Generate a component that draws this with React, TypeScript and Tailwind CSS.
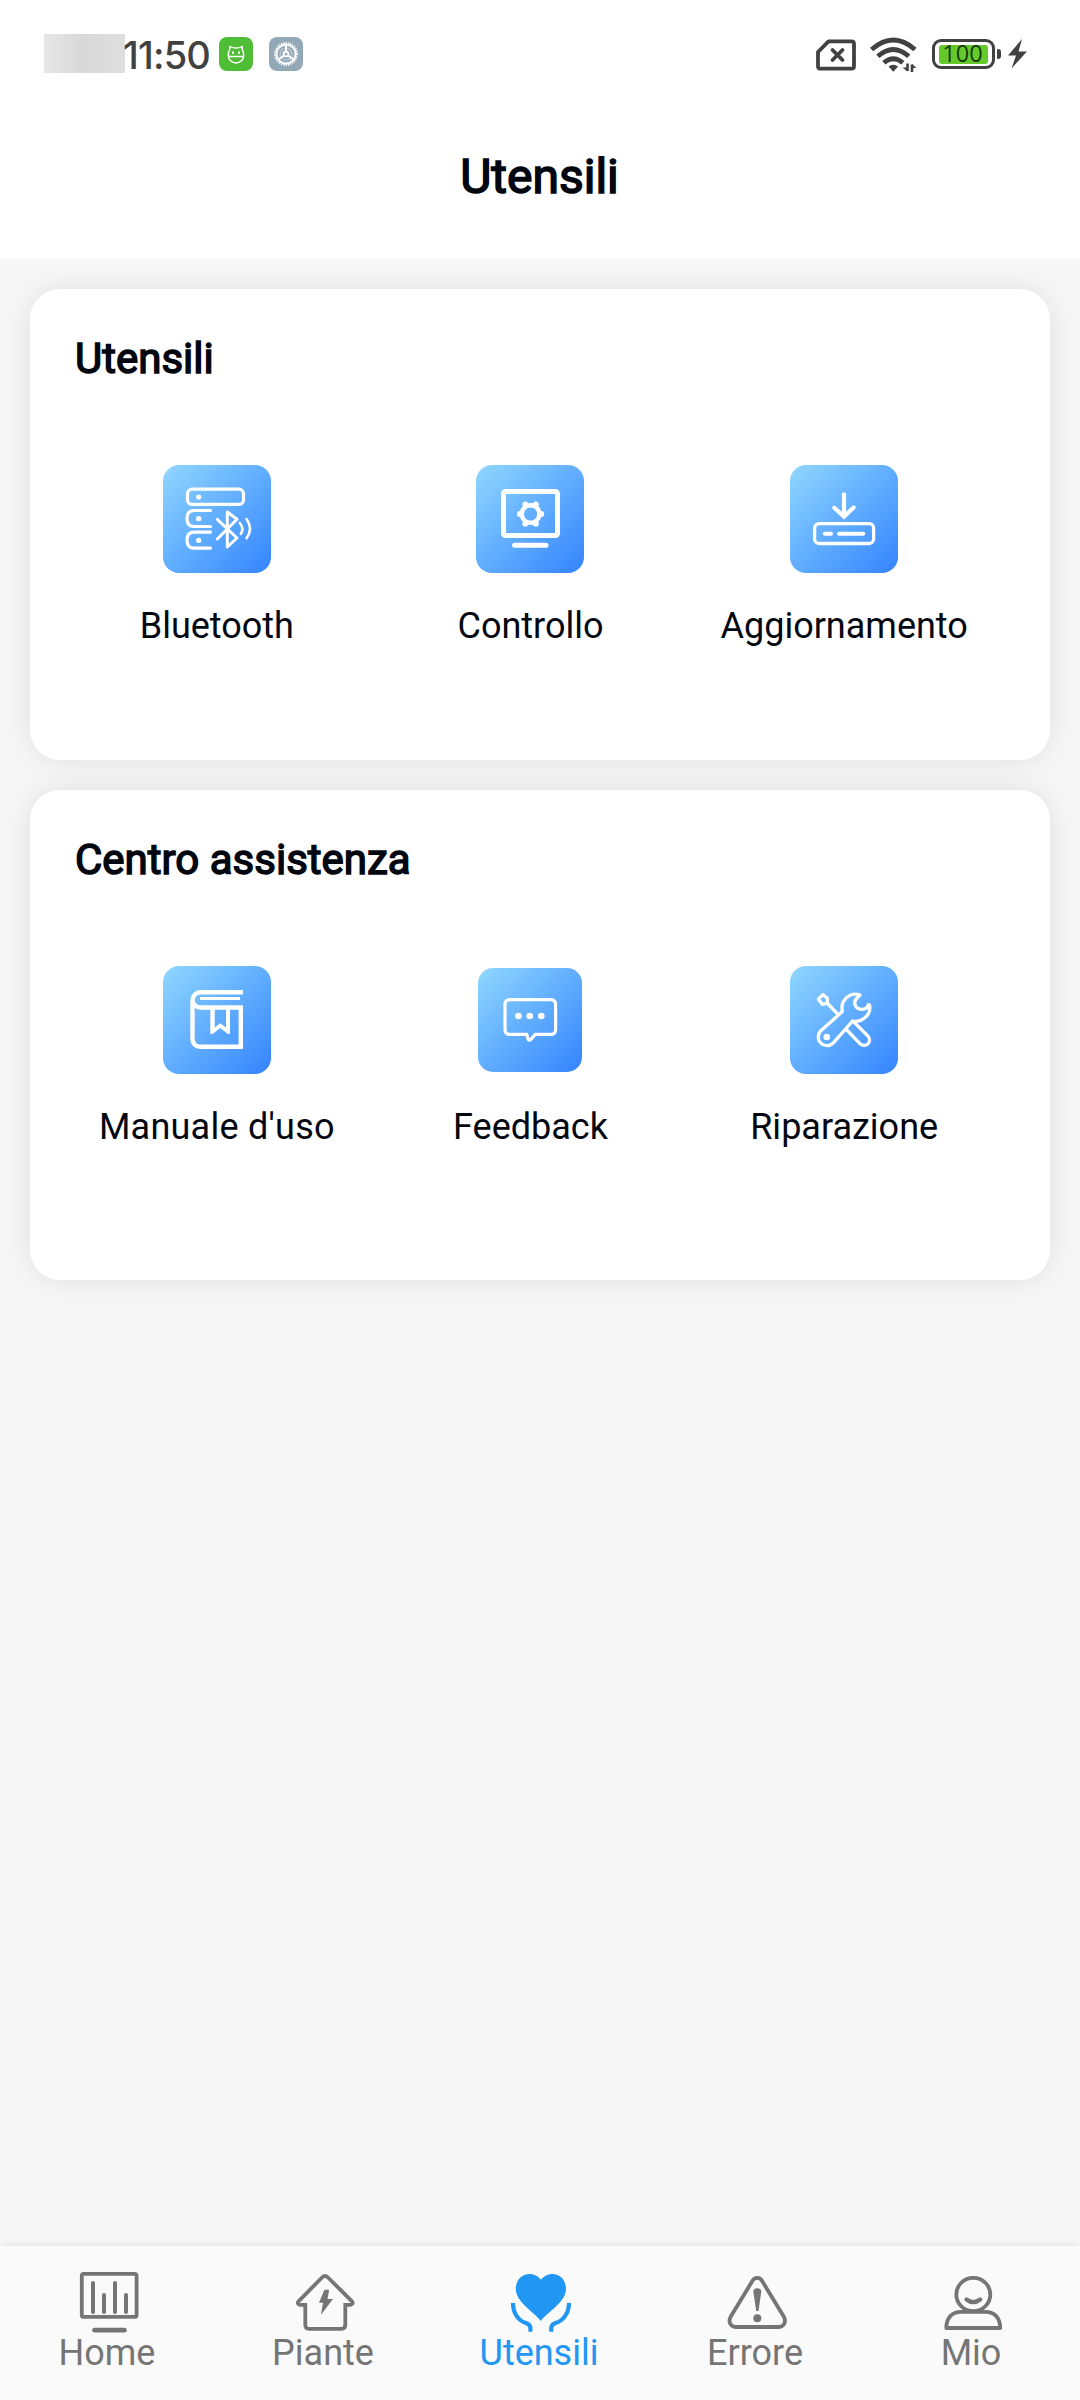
import type { ReactNode } from 'react'

interface Tool {
  label: string
  icon: ReactNode
  small?: boolean
}

function BluetoothIcon() {
  return (
    <svg viewBox="0 0 108 108" className="h-full w-full" fill="none" stroke="white" strokeWidth="3.2" strokeLinecap="round" strokeLinejoin="round">
      <rect x="24.5" y="24.2" width="56" height="15.2" rx="4.5" />
      <path d="M47.5 45.5H31C26 45.5 24 48 24 53.5S26 61.5 31 61.5H47.5" />
      <path d="M47.5 67.2H31C26 67.2 24 69.7 24 75.2S26 83.2 31 83.2H47.5" />
      <path d="M54.3 54.3L74 73L64.3 82V47L74 54.3L54.3 74" strokeWidth="3" />
      <path d="M76.8 58Q81.5 63.5 77.8 69M83.5 54Q90.5 63.5 83.5 73.2" strokeWidth="2.6" />
      <g fill="white" stroke="none">
        <circle cx="35.7" cy="32" r="2.6" />
        <circle cx="35.7" cy="53.7" r="2.6" />
        <circle cx="35.7" cy="75.4" r="2.6" />
      </g>
    </svg>
  )
}

function ControlIcon() {
  return (
    <svg viewBox="0 0 108 108" className="h-full w-full" fill="none" stroke="white" strokeWidth="5">
      <rect x="27.5" y="26.6" width="54" height="44" rx="2" />
      <path d="M38.6 80.3H70" strokeLinecap="round" />
      <circle cx="54.6" cy="49" r="8.8" strokeWidth="4.4" />
      <g fill="white" stroke="none">
        <circle cx="65.3" cy="49" r="2.9" />
        <circle cx="59.9" cy="39.3" r="2.9" />
        <circle cx="49.3" cy="39.3" r="2.9" />
        <circle cx="43.9" cy="49" r="2.9" />
        <circle cx="49.3" cy="58.7" r="2.9" />
        <circle cx="59.9" cy="58.7" r="2.9" />
      </g>
    </svg>
  )
}

function UpdateIcon() {
  return (
    <svg viewBox="0 0 108 108" className="h-full w-full" fill="none" stroke="white" strokeWidth="4.2" strokeLinecap="round">
      <path d="M54 29.3V51.5" />
      <path d="M44.3 42.8L54 51.6L63.6 42.4" />
      <rect x="24.6" y="58.7" width="59" height="19.8" rx="4.5" strokeWidth="3.3" />
      <path d="M34.8 68.8H41M49 68.8H73.3" strokeWidth="4" />
    </svg>
  )
}

function ManualIcon() {
  return (
    <svg viewBox="0 0 108 108" className="h-full w-full" fill="none" stroke="white" strokeWidth="4.4">
      <path d="M80 26.3H37.2A7.5 7.5 0 0 0 37.2 41.5H77.8V80.8H37A7.5 7.5 0 0 1 29.5 73.3V34" />
      <path d="M37 32.4H77" strokeWidth="3" />
      <path d="M47.3 41V68H49.5L57.3 62L64.8 68H67V41H63V61.5L57.3 57.3L51.7 61.5V41Z" fill="white" stroke="none" />
    </svg>
  )
}

function FeedbackIcon() {
  return (
    <svg viewBox="0 0 104 104" className="h-full w-full" fill="none" stroke="white" strokeWidth="3.2" strokeLinejoin="round">
      <path d="M32 31.6H72.6Q77.6 31.6 77.6 36.6V61.4Q77.6 66.4 72.6 66.4H57.3L53 71.2Q51 73.4 49.9 70.6L48.8 66.4H32Q27 66.4 27 61.4V36.6Q27 31.6 32 31.6Z" />
      <g fill="white" stroke="none">
        <circle cx="40.4" cy="48" r="3.3" />
        <circle cx="51.8" cy="48" r="3.3" />
        <circle cx="63.3" cy="48" r="3.3" />
      </g>
    </svg>
  )
}

function RepairIcon() {
  return (
    <svg viewBox="0 0 108 108" className="h-full w-full" fill="none" stroke="white" strokeWidth="3.3" strokeLinecap="round" strokeLinejoin="round">
      <path d="M52.3 45.6L30.6 65A8.7 8.7 0 0 0 42.9 77.3L62.6 55C71.5 57 81.5 49 79.6 39L78.3 38.6C77 44.5 67.5 45.5 65 38.5C63.8 34.5 66.5 32 70 29C60 25.5 50 34 52.3 45.6Z" />
      <path d="M28.4 33.2L33 28.6L37.3 32.2L37.4 37.2L32.4 38.4Z" />
      <path d="M38 38L48 48.4" />
      <path d="M64.2 56.3L78 70.2A5.4 5.4 0 0 1 70.2 77.8L56.8 64" />
      <circle cx="36.7" cy="71" r="3.3" fill="white" stroke="none" />
    </svg>
  )
}

const tools: Tool[] = [
  { label: 'Bluetooth', icon: <BluetoothIcon /> },
  { label: 'Controllo', icon: <ControlIcon /> },
  { label: 'Aggiornamento', icon: <UpdateIcon /> },
]

const support: Tool[] = [
  { label: "Manuale d'uso", icon: <ManualIcon /> },
  { label: 'Feedback', icon: <FeedbackIcon />, small: true },
  { label: 'Riparazione', icon: <RepairIcon /> },
]

const tabs = [
  {
    label: 'Home',
    icon: (
      <>
        <rect x="6.8" y="3.9" width="54.8" height="43" rx="2" />
        <path d="M18 13V42M29 25V42M40 13V42M51 25V42" strokeWidth="4" strokeLinecap="round" />
        <path d="M19.6 60.2H49.4" strokeWidth="4.8" strokeLinecap="round" />
      </>
    ),
  },
  {
    label: 'Piante',
    icon: (
      <>
        <path d="M14.3 34.8H9Q5 34 8 30.8L31 7.5Q34 4.6 37 7.5L60.5 30.8Q63.3 34 59.5 34.8H54.3V55Q54.3 58.8 50.5 58.8H18Q14.3 58.8 14.3 55Z" />
        <path d="M33.4 19.7H38.2L36.5 29H42L30 44.7L32 32.7H28Z" fill="currentColor" stroke="none" />
      </>
    ),
  },
  {
    label: 'Utensili',
    active: true,
    icon: (
      <>
        <path d="M33.8 51C27 42 8.8 32 8.8 19C8.8 10 15 4 22.5 4C27.5 4 31.5 6.5 34 9.8C36.5 6.5 40.5 4 45.5 4C53 4 59 10 59 19C59 32 40.6 42 33.8 51Z" fill="currentColor" stroke="none" />
        <path d="M6 33C6 44 12 51 19 53Q23.4 54.5 23.4 58V61.7M62 33C62 44 55.5 51 48.5 53Q44.3 54.5 44.3 58V61.7" strokeWidth="4.2" />
      </>
    ),
  },
  {
    label: 'Errore',
    icon: (
      <>
        <path d="M29.5 10.8C31.5 7 37 7 39 10.8L61 47C63.5 52 60.5 57 56 57H12.5C8 57 5 52 7.5 47Z" />
        <path d="M30.3 21.5C30.3 17 38.3 17 38.3 21.5L35.5 41H33.2Z" fill="currentColor" stroke="none" />
        <circle cx="34.3" cy="48.2" r="4" fill="currentColor" stroke="none" />
      </>
    ),
  },
  {
    label: 'Mio',
    icon: (
      <>
        <ellipse cx="34.3" cy="24.5" rx="17" ry="16.6" />
        <path d="M27.5 29.5Q34.3 34.8 41.2 29.5" strokeWidth="4.2" strokeLinecap="round" />
        <path d="M7.3 58C7.3 48 13 41.8 22 41.8H46.5C55.5 41.8 61.2 48 61.2 58Z" strokeLinejoin="round" />
      </>
    ),
  },
]

function StatusBar() {
  return (
    <div className="flex h-[108px] items-start pt-[34px] pl-11 text-[#414141]">
      <div className="h-[39px] w-[81px] bg-gradient-to-r from-[#e6e6e6] via-[#d8d8d8] to-[#dfdfdf]" />
      <span className="-ml-[2px] w-[96px] font-[Inter,sans-serif] text-[38px] leading-[42px] font-medium tracking-[-0.8px]">11:50</span>
      <svg viewBox="0 0 34 34" className="mt-[3px] h-[34px] w-[34px]" fill="none" stroke="white" strokeWidth="1.5">
        <rect width="34" height="34" rx="8" fill="#4fbd35" stroke="none" />
        <path d="M12 10Q10 8.5 11 11.5Q9.3 14.5 9.3 18.5A7.7 7.5 0 0 0 24.7 18.5Q24.7 14.5 23 11.5Q24 8.5 22 10Q20.5 11 17 11T12 10ZM9.5 19.5H24.5" />
        <path d="M14 14.5V17M20 14.5V17" strokeWidth="1.8" />
      </svg>
      <svg viewBox="0 0 34 34" className="mt-[3px] ml-4 h-[34px] w-[34px]" fill="none" stroke="white">
        <rect width="34" height="34" rx="8" fill="#94a9b8" stroke="none" />
        <circle cx="17" cy="17" r="10.9" strokeWidth="2" strokeDasharray="1.3 1" />
        <circle cx="17" cy="17" r="9.5" strokeWidth="1.8" />
        <circle cx="17" cy="17" r="6" stroke="#b5c3cd" strokeWidth="1.6" />
        <circle cx="17" cy="17" r="2.4" strokeWidth="1.8" />
        <path d="M17 14.5V8M15 18.5L9.5 22.5M19 18.5L24.5 22.5" strokeWidth="2" />
      </svg>

      <svg viewBox="0 0 40 32" className="mt-[5px] ml-[513px] h-8 w-10" fill="none" stroke="currentColor" strokeWidth="3.8" strokeLinejoin="round">
        <path d="M12.5 2.3H35.5Q38 2.3 38 4.8V27.2Q38 29.7 35.5 29.7H4.5Q2 29.7 2 27.2V13Z" />
        <path d="M16.5 11L26.5 21M26.5 11L16.5 21" strokeLinecap="round" />
      </svg>
      <svg viewBox="0 0 47 36" className="mt-[3px] ml-[14px] h-9 w-[47px]" fill="none" stroke="currentColor" strokeWidth="4.8">
        <path d="M1.6 12.5Q23.3 -6.5 45 12.5" />
        <path d="M7.8 19.3Q23.3 5.5 38.8 19.3" />
        <path d="M13.8 25.8Q23.3 17.5 32.8 25.8" />
        <path d="M18.5 29.5Q23.3 26 28.1 29.5L23.3 34.8Z" fill="currentColor" stroke="none" />
        <path d="M37.5 26.5V34M42 35V27.5" strokeWidth="2.6" />
        <path d="M32.5 30.5H37.5V34.5ZM42 27L46.5 31H42Z" fill="currentColor" stroke="none" />
      </svg>
      <div className="mt-[5px] ml-[15px] flex h-[30px] w-[63px] items-center justify-center rounded-[9px] border-[3px] border-[#414141] p-[3px]">
        <span className="flex h-[19px] w-[49px] items-center justify-center rounded-[3px] bg-[#65c82b] pr-[2px] font-['Open_Sans',sans-serif] text-[23.5px] leading-none font-medium text-[#173b0b]">
          100
        </span>
      </div>
      <div className="mt-[15px] ml-[2px] h-[10px] w-1 rounded-r-[3px] rounded-l-[1px] bg-[#414141]" />
      <svg viewBox="0 0 21 30" className="mt-[5px] ml-[6px] h-[30px] w-[21px]" fill="currentColor">
        <path d="M15 0L1 16.5H9L4.5 29.5L20 12.5H11.5Z" />
      </svg>
    </div>
  )
}

function ToolCard({ title, items, className }: { title: string; items: Tool[]; className: string }) {
  return (
    <section className={`rounded-[30px] bg-white px-[30px] shadow-[0_0_30px_rgba(0,0,0,0.1)] ${className}`}>
      <h2 className="pt-[45px] pl-[15px] text-[42px] leading-[50px] font-normal [-webkit-text-stroke:1.5px_#02060f]">{title}</h2>
      <div className="mt-[81px] grid w-[941px] grid-cols-3">
        {items.map((item) => (
          <div key={item.label} className="flex flex-col items-center">
            <div className="flex h-[108px] w-[108px] items-center justify-center">
              <div
                className={`bg-linear-to-br from-[#91d7ff] via-[#61adff] to-[#3483ff] ${
                  item.small ? 'h-[104px] w-[104px] rounded-[15px]' : 'h-[108px] w-[108px] rounded-[16px]'
                }`}
              >
                {item.icon}
              </div>
            </div>
            <span className={`mt-8 text-[36px] leading-[42px] whitespace-nowrap ${item.label.includes("'") ? 'tracking-[0.25px]' : ''}`}>
              {item.label}
            </span>
          </div>
        ))}
      </div>
    </section>
  )
}

export default function App() {
  return (
    <div className="flex h-[2400px] w-[1080px] flex-col overflow-hidden bg-[#f7f7f7] font-[Roboto,sans-serif] text-[#02060f]">
      <header className="h-[259px] shrink-0 bg-white">
        <StatusBar />
        <h1 className="pt-[41px] pr-px text-center text-[48px] leading-[56px] font-normal [-webkit-text-stroke:1.6px_#02060f]">Utensili</h1>
      </header>

      <main className="flex flex-1 flex-col gap-[30px] overflow-hidden p-[30px]">
        <ToolCard title="Utensili" items={tools} className="h-[471px]" />
        <ToolCard title="Centro assistenza" items={support} className="h-[490px]" />
      </main>

      <nav className="relative grid h-[154px] shrink-0 grid-cols-5 bg-[#fafafa] shadow-[0_0_8px_rgba(0,0,0,0.12)]">
        {tabs.map((tab) => (
          <div key={tab.label} className={`flex flex-col items-center pt-6 ${tab.active ? 'text-[#2196f3]' : 'text-[#757575]'}`}>
            <svg viewBox="0 0 66 66" className="h-[66px] w-[66px] shrink-0" fill="none" stroke="currentColor" strokeWidth="3.8">
              {tab.icon}
            </svg>
            <span className="-mt-1 pr-[2px] text-[36px] leading-[42px]">{tab.label}</span>
          </div>
        ))}
      </nav>
    </div>
  )
}
